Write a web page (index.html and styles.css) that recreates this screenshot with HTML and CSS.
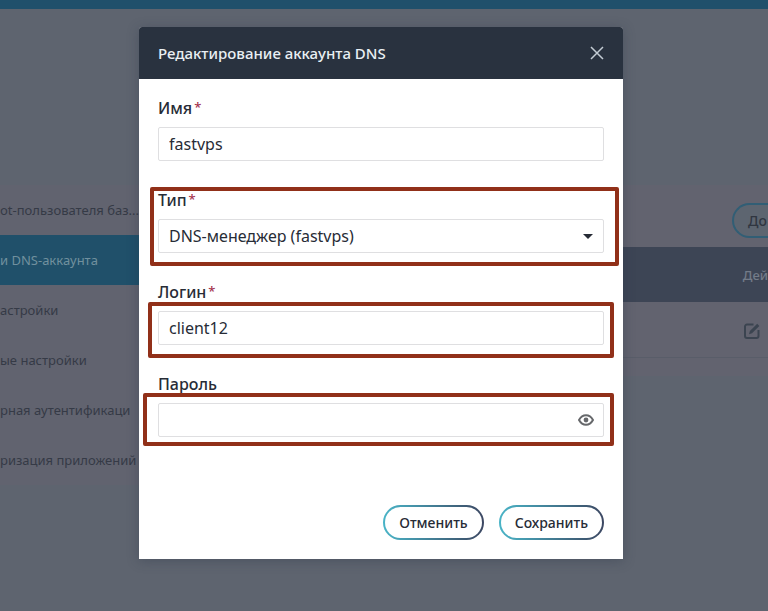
FILE: index.html
```html
<!DOCTYPE html>
<html lang="ru">
<head>
<meta charset="utf-8">
<title>Редактирование аккаунта DNS</title>
<link rel="stylesheet" href="styles.css">
</head>
<body>
<div class="page">
  <div class="topbar"></div>
  <div class="workspace">
    <nav class="sidebar">
      <a class="item" href="#">ot-пользователя баз...</a>
      <a class="item active" href="#">и DNS-аккаунта</a>
      <a class="item" href="#">астройки</a>
      <a class="item" href="#">ые настройки</a>
      <a class="item" href="#">рная аутентификаци</a>
      <a class="item" href="#">ризация приложений</a>
    </nav>
    <main class="content">
      <div class="toolbar"><button class="add" type="button">До</button></div>
      <table class="accounts">
        <thead><tr><th>Дей</th></tr></thead>
        <tbody><tr><td>
          <svg class="edit" viewBox="0 0 16 16" aria-hidden="true"><path d="M9.500 1.500H3a2 2 0 0 0-2 2V13a2 2 0 0 0 2 2h9.500a2 2 0 0 0 2-2V7"/><path class="pen" d="M13.200.8 15.300 2.900 8 10.200 5 11.200 5.900 8.100z"/></svg>
        </td></tr></tbody>
      </table>
    </main>
  </div>
</div>
<div class="overlay">
  <form class="dialog" role="dialog" aria-labelledby="dialog-title">
    <header class="dialog-head">
      <h1 id="dialog-title">Редактирование аккаунта DNS</h1>
      <button class="close" type="button" aria-label="Закрыть"><svg viewBox="0 0 14 14"><path d="M1 1 13 13M13 1 1 13"/></svg></button>
    </header>
    <div class="dialog-body">
      <div class="field">
        <label for="name">Имя<span class="req">*</span></label>
        <input id="name" type="text" value="fastvps">
      </div>
      <div class="field">
        <label for="type">Тип<span class="req">*</span></label>
        <div class="control">
          <select id="type"><option>DNS-менеджер (fastvps)</option></select>
          <svg class="arrow" viewBox="0 0 10 5" aria-hidden="true"><path d="M0 0h10L5 5z"/></svg>
        </div>
        <span class="mark mark-type"></span>
      </div>
      <div class="field">
        <label for="login">Логин<span class="req">*</span></label>
        <input id="login" type="text" value="client12">
        <span class="mark mark-login"></span>
      </div>
      <div class="field">
        <label for="password">Пароль</label>
        <div class="control">
          <input id="password" type="password">
          <button class="reveal" type="button" aria-label="Показать пароль"><svg viewBox="0 0 16 12"><path d="M1 6C4.500-.3 11.500-.3 15 6 11.500 12.300 4.500 12.300 1 6z"/><circle cx="8" cy="6" r="2.400"/></svg></button>
        </div>
        <span class="mark mark-password"></span>
      </div>
    </div>
    <footer class="actions">
      <button class="pill" type="button">Отменить</button>
      <button class="pill" type="submit">Сохранить</button>
    </footer>
  </form>
</div>
</body>
</html>
```
FILE: styles.css
```css
* { box-sizing: border-box; }

body {
  margin: 0;
  background: #5e646f;
  color: #272c36;
  font: 16px/24px "Noto Sans", "Open Sans", sans-serif;
}

button, input, select { font: inherit; color: inherit; }

.page { min-height: 100vh; overflow: hidden; }
.topbar { height: 9px; background: #20506b; }

.workspace {
  display: flex;
  align-items: flex-start;
  margin-top: 176px;
}

.sidebar {
  flex: 0 0 139px;
  background: #61636f;
  font-size: 13px;
}

.item {
  display: block;
  padding: 13px 0;
  color: #353a46;
  white-space: nowrap;
  text-decoration: none;
}

.item.active { background: #20506a; color: #71909e; }

.content {
  flex: 1;
  min-width: 0;
  padding-bottom: 18px;
  background: #62636f;
}

.toolbar {
  display: flex;
  justify-content: flex-end;
  padding: 18px 0 9px;
}

.add {
  width: 36px;
  height: 35px;
  padding: 0 0 0 14px;
  border: 2px solid #315e75;
  border-right: 0;
  border-radius: 18px 0 0 18px;
  background: #5d6570;
  color: #303641;
  font-size: 14px;
  font-weight: 500;
  text-align: left;
}

.accounts { width: 100%; border-collapse: collapse; }
.accounts th, .accounts td { height: 55px; padding: 0; }

.accounts th {
  background: #3d4555;
  color: #737b88;
  font-size: 13px;
  font-weight: 500;
  text-align: right;
}

.accounts td { border-bottom: 1px solid #595d69; text-align: right; }

.edit {
  display: inline-block;
  width: 16px;
  height: 16px;
  margin-right: 8px;
  vertical-align: middle;
  fill: none;
  stroke: #3b4450;
  stroke-width: 2;
}

.edit .pen { fill: #3b4450; stroke: none; }

.overlay {
  position: absolute;
  inset: 0;
  display: flex;
  justify-content: center;
  align-items: flex-start;
  padding: 27px 6px 27px 0;
}

.dialog {
  flex: 0 1 484px;
  background: #fff;
  border-radius: 3px 3px 0 0;
  box-shadow: 0 2px 12px rgba(40, 52, 68, .35);
}

.dialog-head {
  display: flex;
  justify-content: space-between;
  align-items: center;
  height: 52px;
  padding: 0 19px;
  border-radius: 3px 3px 0 0;
  background: #29323f;
  color: #e9eff3;
}

.dialog-head h1 { margin: 0; font-size: 15px; font-weight: 500; }

.close, .reveal {
  display: flex;
  padding: 0;
  border: 0;
  background: none;
}

.close svg {
  width: 14px;
  height: 14px;
  fill: none;
  stroke: #c3ccd4;
  stroke-width: 1.5;
}

.dialog-body {
  display: grid;
  gap: 27px;
  padding: 17px 19px 0;
}

.field { position: relative; }

.field label {
  display: block;
  margin-bottom: 7px;
  font-weight: 500;
}

.req {
  margin-left: 2px;
  color: #a5344e;
  font-size: 13px;
  line-height: 1;
  vertical-align: 2px;
}

.control { position: relative; }

.field input, .field select {
  display: block;
  width: 100%;
  height: 34px;
  padding: 0 10px;
  border: 1px solid #dfdfe1;
  border-radius: 2px;
  background: #fff;
  appearance: none;
}

.arrow {
  position: absolute;
  top: 15px;
  right: 11px;
  width: 10px;
  height: 5px;
  fill: #262b35;
  pointer-events: none;
}

.reveal { position: absolute; top: 11px; right: 10px; }

.reveal svg {
  width: 16px;
  height: 12px;
  fill: none;
  stroke: #66686b;
  stroke-width: 2;
}

.reveal circle { fill: #66686b; stroke: none; }

.mark {
  position: absolute;
  border: 4px solid #913019;
  border-radius: 2px;
  pointer-events: none;
}

.mark-type { inset: -1px -15px -13px -8px; }
.mark-login { inset: 22px -10px -13px -10px; }
.mark-password { inset: 21px -10px -9px -15px; }

.actions {
  display: flex;
  justify-content: flex-end;
  gap: 15px;
  padding: 68px 19px 19px;
}

.pill {
  height: 35px;
  padding: 0 14px;
  border: 2px solid transparent;
  border-radius: 18px;
  background: linear-gradient(#fff, #fff) padding-box, linear-gradient(90deg, #49b4c7, #3c4762) border-box;
  font-size: 14px;
  font-weight: 500;
}
```
